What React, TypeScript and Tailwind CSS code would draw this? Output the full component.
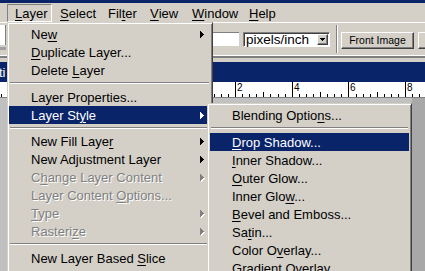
import React from 'react';

type Item = {
  label?: React.ReactNode;
  arrow?: boolean;
  active?: boolean;
  disabled?: boolean;
  sep?: string;
};

const U = ({ children }: { children: React.ReactNode }) => (
  <span className="underline decoration-1 underline-offset-[2px]">{children}</span>
);

function Arrow({ fill }: { fill: string }) {
  return (
    <svg width="4" height="7" viewBox="0 0 4 7" shapeRendering="crispEdges">
      <rect x="0" y="0" width="1" height="7" fill={fill} />
      <rect x="1" y="1" width="1" height="5" fill={fill} />
      <rect x="2" y="2" width="1" height="3" fill={fill} />
      <rect x="3" y="3" width="1" height="1" fill={fill} />
    </svg>
  );
}

function DisabledArrow() {
  return (
    <svg width="5" height="8" viewBox="0 0 5 8" shapeRendering="crispEdges" className="mt-[1px]">
      <g transform="translate(1,1)" fill="#ffffff">
        <rect x="0" y="0" width="1" height="7" />
        <rect x="1" y="1" width="1" height="5" />
        <rect x="2" y="2" width="1" height="3" />
        <rect x="3" y="3" width="1" height="1" />
      </g>
      <g fill="#808080">
        <rect x="0" y="0" width="1" height="7" />
        <rect x="1" y="1" width="1" height="5" />
        <rect x="2" y="2" width="1" height="3" />
        <rect x="3" y="3" width="1" height="1" />
      </g>
    </svg>
  );
}

const layerItems: Item[] = [
  { label: <>Ne<U>w</U></>, arrow: true },
  { label: <><U>D</U>uplicate Layer...</> },
  { label: <>Delete <U>L</U>ayer</> },
  { sep: 'h-[9px]' },
  { label: <>Layer Properties...</> },
  { label: <>Layer St<U>y</U>le</>, arrow: true, active: true },
  { sep: 'h-[8px]' },
  { label: <>New Fill Laye<U>r</U></>, arrow: true },
  { label: <>New Adjustment Layer</>, arrow: true },
  { label: <>C<U>h</U>ange Layer Content</>, arrow: true, disabled: true },
  { label: <>Layer Content <U>O</U>ptions...</>, disabled: true },
  { label: <><U>T</U>ype</>, arrow: true, disabled: true },
  { label: <>Rasteri<U>z</U>e</>, arrow: true, disabled: true },
  { sep: 'h-[9px]' },
  { label: <>New Layer Based <U>S</U>lice</> },
];

const styleItems: Item[] = [
  { label: <>Blending Optio<U>n</U>s...</> },
  { sep: 'h-[9px]' },
  { label: <><U>D</U>rop Shadow...</>, active: true },
  { label: <><U>I</U>nner Shadow...</> },
  { label: <><U>O</U>uter Glow...</> },
  { label: <>Inner Glo<U>w</U>...</> },
  { label: <><U>B</U>evel and Emboss...</> },
  { label: <>Sa<U>t</U>in...</> },
  { label: <>Color O<U>v</U>erlay...</> },
  { label: <><U>G</U>radient Overlay...</> },
];

function MenuRows({ items }: { items: Item[] }) {
  return (
    <>
      {items.map((it, i) => {
        if (it.sep) {
          return (
            <div key={i} className={`${it.sep} pt-[3px]`}>
              <div className="mx-[1px] h-[2px] border-t border-b border-t-[#808080] border-b-white" />
            </div>
          );
        }
        const base = 'flex h-[18px] items-center pl-[22px] pr-[6px] whitespace-nowrap';
        const tone = it.active
          ? 'bg-[#0a246a] text-white'
          : it.disabled
          ? 'text-[#808080] [text-shadow:1px_1px_0_#ffffff]'
          : 'text-black';
        return (
          <div key={i} className={`${base} ${tone}`}>
            <span className="flex-1 leading-none">{it.label}</span>
            {it.arrow &&
              (it.disabled ? (
                <span className="-mr-[1px] flex">
                  <DisabledArrow />
                </span>
              ) : (
                <Arrow fill={it.active ? '#ffffff' : '#000000'} />
              ))}
          </div>
        );
      })}
    </>
  );
}

function Ruler() {
  const origin = 178.33;
  const step = 28.35 / 4;
  const ticks: React.ReactNode[] = [];
  for (let i = -26; i <= 36; i++) {
    const x = Math.round(origin + i * step) + 0.5;
    if (x < 0 || x > 425) continue;
    if (i % 8 === 0) {
      ticks.push(<line key={`t${i}`} x1={x} y1={0} x2={x} y2={15} stroke="#000" />);
      if (x > 213) {
        ticks.push(
          <text key={`n${i}`} x={x + 1.5} y={9} fontSize="10" fontFamily="Liberation Sans, Arial, sans-serif" fill="#000">
            {i / 4}
          </text>
        );
      }
    } else {
      const len = i % 4 === 0 ? 5 : 3;
      ticks.push(<line key={`t${i}`} x1={x} y1={15 - len} x2={x} y2={15} stroke="#000" />);
    }
  }
  return (
    <svg width="425" height="15" viewBox="0 0 425 15" shapeRendering="crispEdges" className="block">
      {ticks}
    </svg>
  );
}

const barItems = [
  { label: <><U>L</U>ayer</>, cls: 'w-[45px] pl-[7px] border border-t-[#808080] border-l-[#808080] border-b-white border-r-white' },
  { label: <><U>S</U>elect</>, cls: 'w-[49px] pl-[7px] border border-transparent' },
  { label: <>Fil<U>t</U>er</>, cls: 'w-[42px] pl-[6px] border border-transparent' },
  { label: <><U>V</U>iew</>, cls: 'w-[42px] pl-[6px] border border-transparent' },
  { label: <><U>W</U>indow</>, cls: 'w-[57px] pl-[6px] border border-transparent' },
  { label: <><U>H</U>elp</>, cls: 'w-[40px] pl-[6px] border border-transparent' },
];

export default function App() {
  return (
    <div className="relative h-[271px] w-[425px] overflow-hidden bg-[#d4d0c8] font-['Liberation_Sans',Arial,sans-serif] text-[13px] text-black">
      {/* window title remnant */}
      <div className="h-[3px] bg-[#0a246a]" />

      {/* menu bar */}
      <div className="flex h-[19px] items-start pl-[7px] pt-[1px]">
        {barItems.map((b, i) => (
          <div key={i} className={`flex h-[18px] shrink-0 items-center whitespace-nowrap leading-none ${b.cls}`}>
            {b.label}
          </div>
        ))}
      </div>

      {/* options bar */}
      <div className="flex h-[33px] items-start overflow-hidden border-t border-white">
        <div className="flex w-[6px] shrink-0 flex-col">
          <div className="mt-[2px] h-[20px] border-r border-[#808080] bg-white" />
          <div className="mt-[2px] h-[3px] bg-[#a0a0a0]" />
        </div>
        <div className="ml-[194px] mt-[9px] h-[14px] w-[39px] shrink-0 border-t border-l border-[#808080] bg-white" />
        <div className="ml-[4px] mt-[9px] flex h-[15px] w-[87px] shrink-0 items-center border border-t-[#808080] border-l-[#808080] border-b-white border-r-white bg-white pl-[2px] pr-[1px] shadow-[inset_1px_1px_0_#404040]">
          <span className="flex-1 whitespace-nowrap text-[13.5px] leading-none">pixels/inch</span>
          <div className="flex h-[11px] w-[11px] shrink-0 items-center justify-center border border-t-white border-l-white border-b-[#404040] border-r-[#404040] bg-[#d4d0c8] shadow-[inset_-1px_-1px_0_#808080]">
            <svg width="5" height="3" viewBox="0 0 5 3" shapeRendering="crispEdges">
              <rect x="0" y="0" width="5" height="1" fill="#000" />
              <rect x="1" y="1" width="3" height="1" fill="#000" />
              <rect x="2" y="2" width="1" height="1" fill="#000" />
            </svg>
          </div>
        </div>
        <div className="ml-[6px] mt-[2px] h-[28px] w-[2px] shrink-0 border-l border-r border-l-[#808080] border-r-white" />
        <div className="ml-[3px] mt-[9px] flex h-[17px] w-[73px] shrink-0 items-center justify-center whitespace-nowrap border border-t-white border-l-white border-b-[#404040] border-r-[#404040] text-[10.5px] leading-none shadow-[inset_-1px_-1px_0_#808080]">
          Front Image
        </div>
        <div className="ml-[4px] mt-[9px] h-[17px] w-[60px] shrink-0 border border-t-white border-l-white border-b-[#404040] border-r-[#404040] shadow-[inset_-1px_-1px_0_#808080]" />
      </div>
      <div className="h-[1px] bg-white" />
      <div className="h-[2px] bg-[#808080]" />
      <div className="h-[4px]" />

      {/* document title bar */}
      <div className="flex h-[20px] items-center bg-[#0a246a] text-white">
        <span className="-ml-[1px] leading-none">ti</span>
      </div>

      {/* ruler */}
      <div className="h-[16px] border-b border-[#808080] bg-white">
        <Ruler />
      </div>

      {/* canvas */}
      <div className="flex h-[173px]">
        <div className="w-[412px] shrink-0 bg-[#c0c0c0]" />
        <div className="flex-1 bg-[#a8a8a8]" />
      </div>

      {/* Layer menu */}
      <div className="absolute left-[7px] top-[22px] h-[260px] w-[206px] border border-t-[#d4d0c8] border-l-[#d4d0c8] border-b-[#404040] border-r-[#404040] bg-[#d4d0c8] pl-[1px] pr-[2px] pt-[2px] shadow-[inset_1px_1px_0_#ffffff,inset_-1px_-1px_0_#808080]">
        <MenuRows items={layerItems} />
      </div>

      {/* Layer Style submenu */}
      <div className="absolute left-[207px] top-[103px] h-[190px] w-[205px] border border-t-[#d4d0c8] border-l-[#d4d0c8] border-b-[#404040] border-r-[#404040] bg-[#d4d0c8] pl-[2px] pr-[2px] pt-[2px] shadow-[inset_1px_1px_0_#ffffff,inset_-1px_-1px_0_#808080]">
        <MenuRows items={styleItems} />
      </div>
    </div>
  );
}
